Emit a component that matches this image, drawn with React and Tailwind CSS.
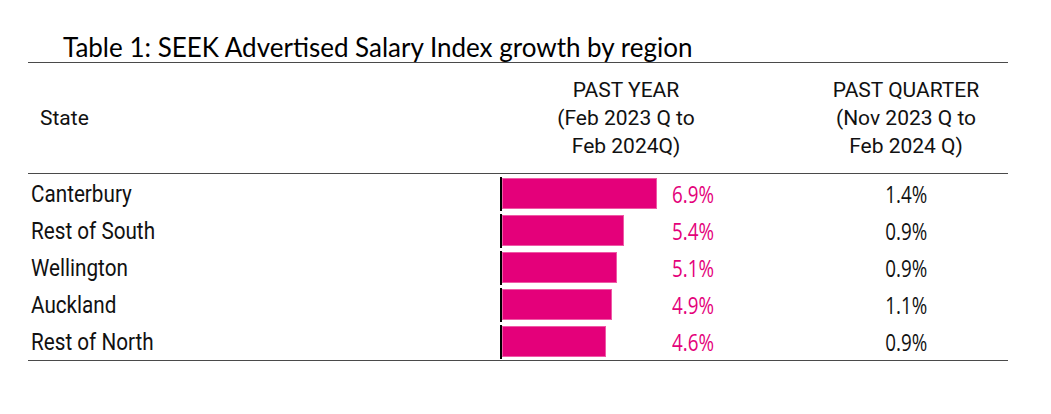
const rows = [
  { state: 'Canterbury', year: 6.9, quarter: '1.4%' },
  { state: 'Rest of South', year: 5.4, quarter: '0.9%' },
  { state: 'Wellington', year: 5.1, quarter: '0.9%' },
  { state: 'Auckland', year: 4.9, quarter: '1.1%' },
  { state: 'Rest of North', year: 4.6, quarter: '0.9%' },
];

export default function App() {
  return (
    <div className="w-[1051px] h-[414px] bg-white pt-[33px] pl-[28px]">
      <div className="w-[980px]">
        <h1 className="pl-[35px] text-[26px] leading-[29px] text-black font-['Lato',sans-serif] border-b border-[#4a4a4a]">
          Table 1: SEEK Advertised Salary Index growth by region
        </h1>

        <div className="grid grid-cols-[472px_252px_52px_204px] h-[111px] items-center border-b border-[#4a4a4a] font-['Roboto',sans-serif] text-[21px] leading-[28px] text-[#111]">
          <div className="pl-[12px]">State</div>
          <div className="text-center">
            PAST YEAR
            <br />
            (Feb 2023 Q to
            <br />
            Feb 2024Q)
          </div>
          <div />
          <div className="text-center">
            PAST QUARTER
            <br />
            (Nov 2023 Q to
            <br />
            Feb 2024 Q)
          </div>
        </div>

        <div className="pt-[1px] border-b border-[#4a4a4a]">
          {rows.map((r) => (
            <div
              key={r.state}
              className="grid grid-cols-[472px_252px_52px_204px] h-[37px] items-center"
            >
              <div className="pl-[3px]">
                <span className="inline-block origin-left scale-x-[0.88] font-['Roboto',sans-serif] text-[23.5px] leading-[30px] text-[#111]">
                  {r.state}
                </span>
              </div>
              <div className="flex items-center">
                <div className="w-[172px] h-[34px] border-l-2 border-black flex items-center">
                  <div
                    className="h-[31px] bg-[#e4007a] border border-[#ee5aa6]"
                    style={{ width: `${r.year * 22.5}px` }}
                  />
                </div>
                <span className="inline-block origin-left scale-x-[0.8] font-['Open_Sans',sans-serif] text-[23.5px] leading-[30px] text-[#e4007a]">
                  {r.year.toFixed(1)}%
                </span>
              </div>
              <div />
              <div className="text-center">
                <span className="inline-block scale-x-[0.8] font-['Open_Sans',sans-serif] text-[23.5px] leading-[30px] text-[#111]">
                  {r.quarter}
                </span>
              </div>
            </div>
          ))}
        </div>
      </div>
    </div>
  );
}
